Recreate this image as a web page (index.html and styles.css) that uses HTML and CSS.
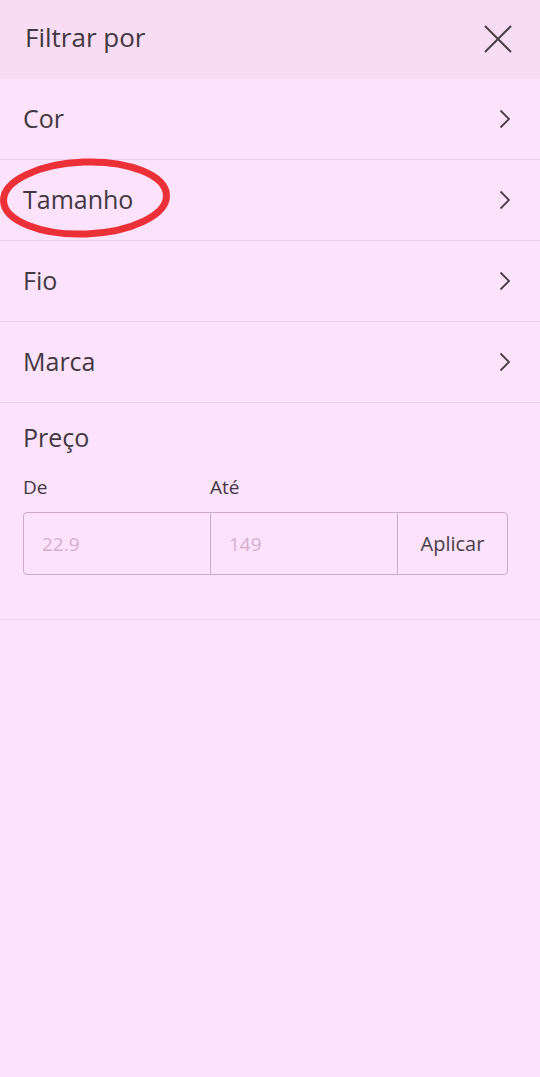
FILE: index.html
```html
<!DOCTYPE html>
<html lang="pt">
<head>
<meta charset="utf-8">
<link rel="stylesheet" href="styles.css">
</head>
<body>
<div class="panel">
  <header class="header">
    <span class="title">Filtrar por</span>
    <svg class="close" width="28" height="28" viewBox="0 0 28 28"><path d="M1 1 L27 27 M27 1 L1 27" stroke="#4a4048" stroke-width="2" fill="none"/></svg>
  </header>
  <div class="row"><span>Cor</span><svg class="chev" width="12" height="20" viewBox="0 0 12 20"><path d="M1.5 1.5 L10 10 L1.5 18.5" stroke="#4a4048" stroke-width="1.8" fill="none"/></svg></div>
  <div class="row highlighted"><span>Tamanho</span><svg class="chev" width="12" height="20" viewBox="0 0 12 20"><path d="M1.5 1.5 L10 10 L1.5 18.5" stroke="#4a4048" stroke-width="1.8" fill="none"/></svg>
    <svg class="mark" width="180" height="90" viewBox="0 0 180 90"><ellipse cx="85" cy="41" rx="81.5" ry="36" transform="rotate(-2 85 41)" stroke="#ec3037" stroke-width="7" fill="none"/></svg>
  </div>
  <div class="row"><span>Fio</span><svg class="chev" width="12" height="20" viewBox="0 0 12 20"><path d="M1.5 1.5 L10 10 L1.5 18.5" stroke="#4a4048" stroke-width="1.8" fill="none"/></svg></div>
  <div class="row"><span>Marca</span><svg class="chev" width="12" height="20" viewBox="0 0 12 20"><path d="M1.5 1.5 L10 10 L1.5 18.5" stroke="#4a4048" stroke-width="1.8" fill="none"/></svg></div>
  <section class="price">
    <div class="price-title">Preço</div>
    <div class="labels"><span>De</span><span>Até</span></div>
    <div class="range">
      <div class="field placeholder">22.9</div>
      <div class="field placeholder">149</div>
      <div class="field apply">Aplicar</div>
    </div>
  </section>
</div>
</body>
</html>
```
FILE: styles.css
```css
html, body {
  margin: 0;
  padding: 0;
  background: #fde2fb;
}
body {
  width: 540px;
  height: 1077px;
  font-family: "Open Sans", "Noto Sans", sans-serif;
  color: #413841;
}
.header {
  height: 79px;
  background: #f8dcf3;
  display: flex;
  align-items: center;
  justify-content: space-between;
  padding: 0 28px 0 25px;
}
.title {
  font-size: 26px;
  line-height: 1;
  margin-top: -6px;
}
.close {
  display: block;
  margin-top: -2px;
}
.row {
  position: relative;
  height: 80px;
  border-bottom: 1px solid #ecd0e9;
  display: flex;
  align-items: center;
  justify-content: space-between;
  padding: 0 29px 0 23px;
  font-size: 25px;
}
.row span {
  position: relative;
  z-index: 1;
  margin-top: -2px;
}
.chev {
  display: block;
}
.mark {
  position: absolute;
  left: 0;
  top: -3px;
  pointer-events: none;
}
.price {
  padding: 17px 32px 44px 23px;
  border-bottom: 1px solid #ecd0e9;
}
.price-title {
  font-size: 25px;
  line-height: 34px;
}
.labels {
  display: grid;
  grid-template-columns: 187px 1fr;
  font-size: 19px;
  line-height: 26px;
  margin-top: 20px;
}
.range {
  display: grid;
  grid-template-columns: 188px 186px 111px;
  grid-template-rows: 63px;
  margin-top: 12px;
}
.field {
  border: 1px solid #ccabc8;
  display: flex;
  align-items: center;
  font-size: 19px;
  box-sizing: border-box;
  height: 63px;
}
.placeholder {
  color: #d4aed0;
  padding-left: 18px;
}
.range .field:first-child {
  border-radius: 4px 0 0 4px;
}
.range .field:nth-child(2) {
  border-left: none;
  border-right: none;
}
.apply {
  justify-content: center;
  border-radius: 0 4px 4px 0;
  color: #4a4048;
  font-size: 20px;
}
```
